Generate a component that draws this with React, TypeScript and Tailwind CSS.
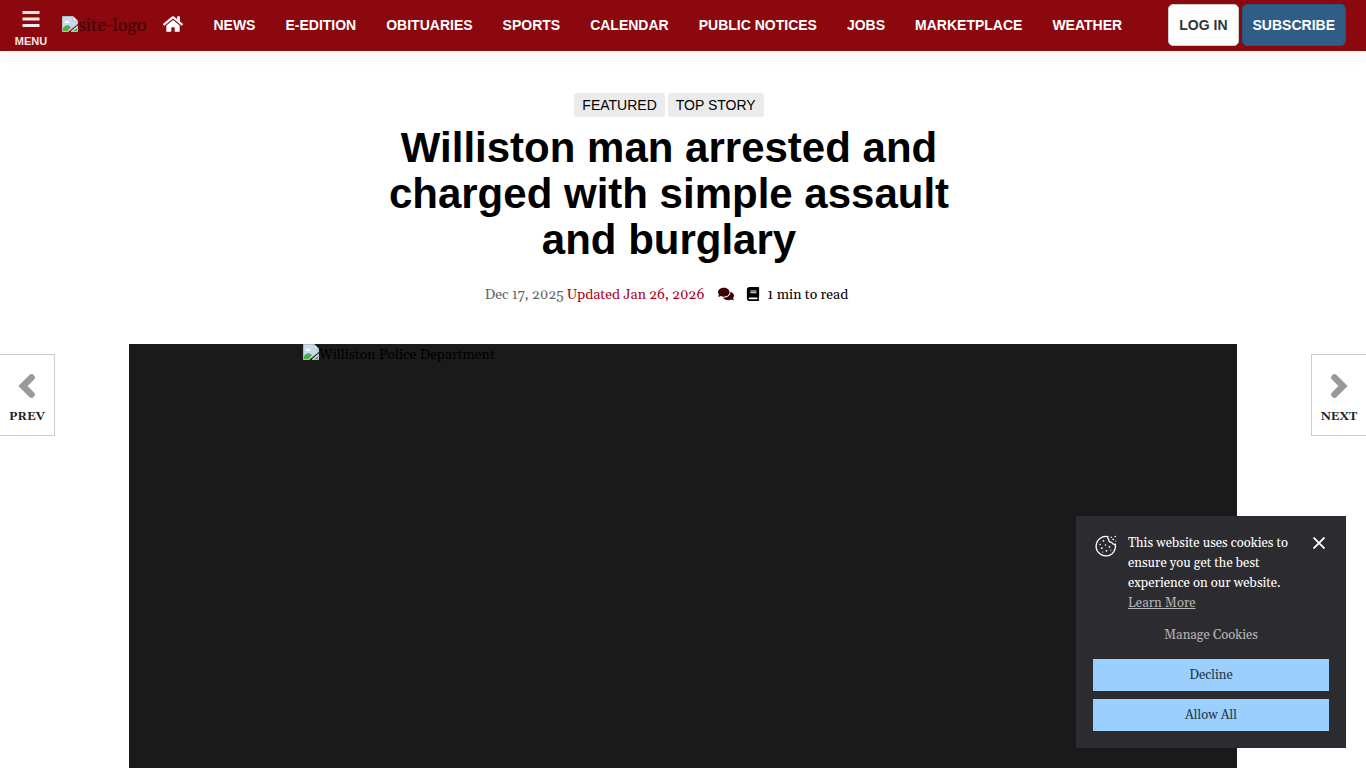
import React from "react";
import { FaHome, FaComments, FaBook } from "react-icons/fa";

const links = [
  "News",
  "E-Edition",
  "Obituaries",
  "Sports",
  "Calendar",
  "Public Notices",
  "Jobs",
  "Marketplace",
  "Weather",
];

function MissingImage() {
  return (
    <svg className="h-4 w-4 shrink-0" viewBox="0 0 16 16" aria-hidden="true">
      <path d="M0.5 0.5H11L15.5 5V8L6 15.5H0.5Z" fill="#c6d9f5" stroke="#b9bec4" />
      <path d="M11 0.5V5H15.5Z" fill="#fff" stroke="#b9bec4" />
      <path d="M3 6a1.6 1.6 0 0 1 3-.6A1.5 1.5 0 0 1 7.5 7H3Z" fill="#fff" />
      <path d="M1 15V12C3 9 6 8 9 11L5.5 15Z" fill="#4caf3f" />
      <path d="M9 15.5L15.5 10V15.5Z" fill="#eef2f6" stroke="#b9bec4" />
      <path d="M11 15L15 12V15Z" fill="#4caf3f" />
    </svg>
  );
}

function Chevron({ d }: { d: string }) {
  return (
    <svg className="mb-2 h-[26px] w-[18px]" viewBox="0 0 18 26" fill="none" stroke="#999" aria-hidden="true">
      <path d={d} strokeWidth="6.6" strokeLinecap="round" strokeLinejoin="miter" />
    </svg>
  );
}

function CookieIcon() {
  return (
    <svg className="mt-0.5 h-[22px] w-[22px] shrink-0" viewBox="0 0 22 22" fill="none" stroke="#fff" aria-hidden="true">
      <path
        d="M12.8 1.7A9.7 9.7 0 1 0 20.3 9.2C18.6 9.6 17.1 8.9 16.6 7.4C14.6 7.4 13.3 6 13.8 4.3C12.8 3.7 12.5 2.7 12.8 1.7Z"
        strokeWidth="1.3"
      />
      <g fill="#fff" stroke="none">
        <circle cx="8.5" cy="5.8" r="0.9" />
        <circle cx="5" cy="9.5" r="0.8" />
        <circle cx="10.5" cy="10" r="0.8" />
        <circle cx="6.8" cy="13.2" r="0.9" />
        <circle cx="11.5" cy="15.8" r="0.9" />
        <circle cx="14.5" cy="11.8" r="0.9" />
        <circle cx="15.8" cy="15" r="0.6" />
        <circle cx="7.8" cy="17" r="0.6" />
        <circle cx="16.3" cy="2.2" r="0.7" />
        <circle cx="20.3" cy="1.5" r="0.8" />
        <circle cx="18.2" cy="4.4" r="0.8" />
        <circle cx="20.7" cy="6" r="0.6" />
      </g>
    </svg>
  );
}

function Header() {
  return (
    <header className="flex h-[51px] items-center bg-[#8b080e] pr-5 pb-0.5 font-['Liberation_Sans',Arial,sans-serif] text-sm font-bold text-white shadow-[0_0_20px_rgba(0,0,0,0.08)]">
      <button className="flex w-[62px] flex-col items-center gap-[7px] pt-[10px] text-[11px] leading-[14px] text-[#f5e6e7]">
        <svg className="h-4 w-[18px]" viewBox="0 0 18 16" fill="currentColor" aria-hidden="true">
          <path d="M0.5 0h17v3h-17zM0.5 6.5h17v3h-17zM0.5 13h17v3h-17z" />
        </svg>
        MENU
      </button>
      <a
        href="#home"
        className="flex items-start pt-0.5 font-[Georgia,Gelasio,'Liberation_Serif',serif] text-lg leading-5 font-normal text-[#3e0306]"
      >
        <MissingImage />
        site-logo
      </a>
      <nav className="ml-[17px] flex items-center gap-[30px] whitespace-nowrap uppercase">
        <a href="#front" aria-label="Home" className="pb-0.5">
          <FaHome className="h-5 w-5" />
        </a>
        {links.map((l) => (
          <a key={l} href={"#" + l}>
            {l}
          </a>
        ))}
      </nav>
      <div className="ml-auto flex gap-[3px] whitespace-nowrap">
        <button className="h-[42px] rounded-[5px] border border-[#ccc] bg-white px-2.5 text-[#333]">LOG IN</button>
        <button className="h-[42px] rounded-[5px] border border-[#28557f] bg-[#2f5d85] px-2.5">SUBSCRIBE</button>
      </div>
    </header>
  );
}

function CookieNotice() {
  return (
    <section
      aria-label="Cookies"
      className="fixed right-5 bottom-5 flex w-[270px] flex-col bg-[#2c2c30] px-[17px] pt-[17px] pb-[17px] text-[13px] text-white"
    >
      <div className="flex items-start pl-0.5">
        <CookieIcon />
        <p className="ml-[11px] flex-1 leading-5">
          This website uses cookies to ensure you get the best experience on our website.{" "}
          <a href="#learn" className="block text-[#b5b5b7] underline">
            Learn More
          </a>
        </p>
        <button aria-label="Close" className="ml-2 p-1">
          <svg className="h-3 w-3" viewBox="0 0 12 12" stroke="#fff" strokeWidth="1.8" aria-hidden="true">
            <path d="M0.5 0.5L11.5 11.5M11.5 0.5L0.5 11.5" />
          </svg>
        </button>
      </div>
      <button className="mt-3 mb-3.5 self-center leading-5 text-[#b5b5b7]">Manage Cookies</button>
      <button className="mb-2 h-8 bg-[#9acffe] text-[#24364b]">Decline</button>
      <button className="h-8 bg-[#9acffe] text-[#24364b]">Allow All</button>
    </section>
  );
}

export default function App() {
  return (
    <div className="flex min-h-screen flex-col bg-white font-[Georgia,Gelasio,'Liberation_Serif',serif] text-sm text-black">
      <Header />
      <main className="mx-auto flex w-full max-w-[1108px] flex-1 flex-col">
        <div className="flex flex-col items-center pt-[42px] pr-7 text-center">
          <div className="flex gap-[3px] font-['Liberation_Sans',Arial,sans-serif] leading-6">
            <a href="#featured" className="rounded-[3px] bg-[#ebebeb] px-2">FEATURED</a>
            <a href="#top" className="rounded-[3px] bg-[#ebebeb] px-2">TOP STORY</a>
          </div>
          <h1 className="mt-2 max-w-[620px] font-['Liberation_Sans',Arial,sans-serif] text-[42px] leading-[46px] font-bold">
            Williston man arrested and charged with simple assault and burglary
          </h1>
          <div className="mt-[22px] mb-[39px] flex items-center pr-[5px] leading-5">
            <span className="text-[#666]">Dec 17, 2025</span>
            <span className="ml-[3px] text-[#b00020]">Updated Jan 26, 2026</span>
            <a href="#comments" aria-label="Comments" className="ml-3.5 pb-0.5 text-[#3e0306]">
              <FaComments className="h-4 w-4" />
            </a>
            <FaBook className="mr-[7px] ml-3 mb-0.5 h-3.5 w-3.5" />
            <span>1 min to read</span>
          </div>
        </div>
        <figure className="flex flex-1 items-start bg-[#1a1a1a] pl-[174px]">
          <MissingImage />
          <span className="leading-[22px]">Williston Police Department</span>
        </figure>
      </main>
      <a
        href="#prev"
        className="fixed top-[354px] left-0 flex h-[82px] w-[55px] flex-col items-center border border-l-0 border-[#ccc] bg-white pt-[18px] text-xs leading-5 font-bold text-[#222]"
      >
        <Chevron d="M13.5 4.5L5 13L13.5 21.5" />
        PREV
      </a>
      <a
        href="#next"
        className="fixed top-[354px] right-0 flex h-[82px] w-[55px] flex-col items-center border border-r-0 border-[#ccc] bg-white pt-[18px] text-xs leading-5 font-bold text-[#222]"
      >
        <Chevron d="M4.5 4.5L13 13L4.5 21.5" />
        NEXT
      </a>
      <CookieNotice />
    </div>
  );
}
